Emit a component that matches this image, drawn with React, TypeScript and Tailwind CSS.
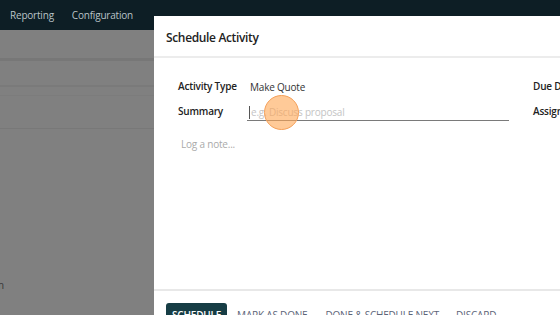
import React from 'react'

const font = { fontFamily: '"Open Sans", "Noto Sans", sans-serif' }

function Background() {
  return (
    <div className="flex flex-col h-full">
      <div className="h-[30px] bg-[#0d1e25] flex items-center gap-[18px] px-[10px] text-[10px] tracking-[-0.2px] text-[#b9c3c7]">
        <span>Reporting</span>
        <span>Configuration</span>
      </div>
      <div className="flex-1 bg-[#808080] flex flex-col">
        <div className="h-[31px] border-b-[3px] border-[#777777]" />
        <div className="h-[26px] border-b-[2px] border-[#7a7a7a]" />
        <div className="h-[9px] border-b border-[#7c7c7c]" />
        <div className="h-[33px] border-b border-[#787878]" />
        <div className="flex-1 flex items-end pb-[22px]">
          <span className="text-[11px] text-[#3a3a3a] -ml-[6px]">m</span>
        </div>
      </div>
    </div>
  )
}

function Modal() {
  return (
    <div className="absolute left-[154px] top-[16px] w-[420px] h-[333px] bg-white flex flex-col text-[10px] tracking-[-0.2px]">
      <div className="h-[42px] shrink-0 border-b-2 border-[#ececec] flex items-center px-[12px] pt-[3px]">
        <span className="text-[12px] tracking-[-0.35px] font-semibold text-[#222]">Schedule Activity</span>
      </div>
      <div className="flex-1 px-[24px] pt-[18px]">
        <div className="flex">
          <div className="w-[355px] shrink-0 flex flex-col">
            <div className="flex items-center h-[20px]">
              <span className="w-[72px] font-semibold text-[#222]">Activity Type</span>
              <span className="text-[#333] pt-[2px]">Make Quote</span>
            </div>
            <div className="flex items-center h-[26px] mt-[2px]">
              <span className="w-[69px] font-semibold text-[#222]">Summary</span>
              <div className="w-[262px] h-[20px] border-b-[1.5px] border-[#7a7a7a] flex items-center pl-[2px] pt-[4px]">
                <span className="w-px h-[13px] bg-[#555] mr-px" />
                <span className="text-[#c4c4c4]">e.g. Discuss proposal</span>
              </div>
            </div>
            <div className="mt-[13px] pl-[3px] text-[#aaaaaa]">Log a note...</div>
          </div>
          <div className="flex flex-col">
            <div className="h-[20px] flex items-center font-semibold text-[#222] whitespace-nowrap">Due Date</div>
            <div className="h-[26px] mt-[2px] flex items-center font-semibold text-[#222] whitespace-nowrap">Assigned to</div>
          </div>
        </div>
      </div>
      <div className="h-[60px] shrink-0 border-t-2 border-[#e8e8e8] flex items-start px-[12px] pt-[12px]">
        <div className="h-[24px] px-[6px] bg-[#173d45] rounded-[3px] flex items-center font-semibold text-white">SCHEDULE</div>
        <div className="h-[24px] ml-[10px] flex items-center text-[#5c6478]">MARK AS DONE</div>
        <div className="h-[24px] ml-[18px] flex items-center text-[#5c6478]">DONE &amp; SCHEDULE NEXT</div>
        <div className="h-[24px] ml-[17px] flex items-center text-[#5c6478]">DISCARD</div>
      </div>
      <div className="absolute left-[110px] top-[79px] w-[35px] h-[35px] rounded-full bg-[#ffa654]/60 border border-[#f5a059]" />
    </div>
  )
}

export default function App() {
  return (
    <div className="relative w-[560px] h-[315px] overflow-hidden" style={font}>
      <Background />
      <Modal />
    </div>
  )
}
